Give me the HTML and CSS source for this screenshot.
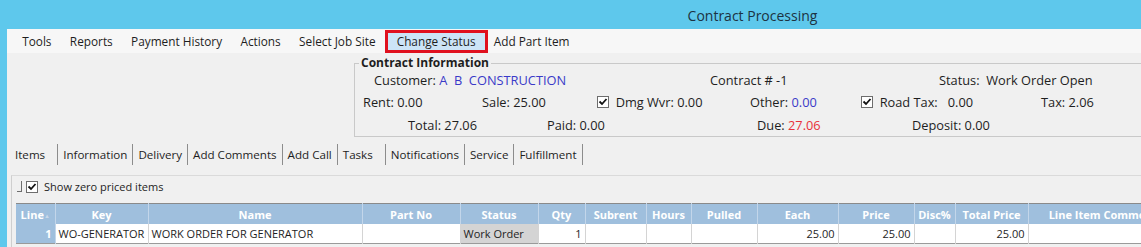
FILE: index.html
```html
<!DOCTYPE html>
<html lang="en">
<head>
    <meta charset="UTF-8">
    <title>Contract Processing</title>
    <link rel="stylesheet" href="styles.css">
</head>
<body>
    <div class="titlebar">Contract Processing</div>

    <div class="window">
        <nav class="menubar">
            <span class="menu-item">Tools</span>
            <span class="menu-item">Reports</span>
            <span class="menu-item">Payment History</span>
            <span class="menu-item">Actions</span>
            <span class="menu-item">Select Job Site</span>
            <span class="menu-item active">Change Status</span>
            <span class="menu-item">Add Part Item</span>
        </nav>

        <fieldset class="contract">
            <legend>Contract Information</legend>
            <div class="row row1">
                <span class="c-cust">Customer: <span class="blue">A&nbsp; B&nbsp; CONSTRUCTION</span></span>
                <span class="c-contract">Contract # -1</span>
                <span>Status:&nbsp;&nbsp;Work Order Open</span>
            </div>
            <div class="row row2">
                <span class="c-rent">Rent: 0.00</span>
                <span class="c-sale">Sale: 25.00</span>
                <span class="c-dmg"><svg class="check" viewBox="0 0 12 12"><rect x="0.5" y="0.5" width="11" height="11" fill="#fff" stroke="#6d6d6d"/><path d="M2.5 5.5 L5 8 L9.5 3" fill="none" stroke="#111" stroke-width="1.8"/></svg>&nbsp; Dmg Wvr: 0.00</span>
                <span class="c-other">Other: <span class="blue">0.00</span></span>
                <span class="c-road"><svg class="check" viewBox="0 0 12 12"><rect x="0.5" y="0.5" width="11" height="11" fill="#fff" stroke="#6d6d6d"/><path d="M2.5 5.5 L5 8 L9.5 3" fill="none" stroke="#111" stroke-width="1.8"/></svg>&nbsp; Road Tax:&nbsp;&nbsp; 0.00</span>
                <span>Tax: 2.06</span>
            </div>
            <div class="row row3">
                <span class="c-total">Total: 27.06</span>
                <span class="c-paid">Paid: 0.00</span>
                <span class="c-due">Due: <span class="red">27.06</span></span>
                <span>Deposit: 0.00</span>
            </div>
        </fieldset>

        <div class="tabs">
            <span class="tab selected">Items</span>
            <span class="tab">Information</span>
            <span class="tab">Delivery</span>
            <span class="tab">Add Comments</span>
            <span class="tab">Add Call</span>
            <span class="tab wide">Tasks</span>
            <span class="tab">Notifications</span>
            <span class="tab">Service</span>
            <span class="tab last">Fulfillment</span>
        </div>

        <div class="panel">
            <div class="zero-row">
                <span class="corner"></span>
                <svg class="check" viewBox="0 0 12 12"><rect x="0.5" y="0.5" width="11" height="11" fill="#fff" stroke="#6d6d6d"/><path d="M2.5 5.5 L5 8 L9.5 3" fill="none" stroke="#111" stroke-width="1.8"/></svg>
                <span>Show zero priced items</span>
            </div>

            <table class="grid">
                <colgroup>
                    <col class="w-line"><col class="w-key"><col class="w-name"><col class="w-part">
                    <col class="w-status"><col class="w-qty"><col class="w-subrent"><col class="w-hours">
                    <col class="w-pulled"><col class="w-each"><col class="w-price"><col class="w-disc">
                    <col class="w-total"><col class="w-comment">
                </colgroup>
                <thead>
                    <tr>
                        <th>Line<span class="sort">▲</span></th>
                        <th>Key</th>
                        <th>Name</th>
                        <th>Part No</th>
                        <th>Status</th>
                        <th>Qty</th>
                        <th>Subrent</th>
                        <th>Hours</th>
                        <th>Pulled</th>
                        <th>Each</th>
                        <th>Price</th>
                        <th>Disc%</th>
                        <th>Total Price</th>
                        <th>Line Item Comment</th>
                    </tr>
                </thead>
                <tbody>
                    <tr>
                        <td class="line-cell">1</td>
                        <td>WO-GENERATOR</td>
                        <td>WORK ORDER FOR GENERATOR</td>
                        <td></td>
                        <td class="status-cell">Work Order</td>
                        <td class="num">1</td>
                        <td></td>
                        <td></td>
                        <td></td>
                        <td class="num">25.00</td>
                        <td class="num">25.00</td>
                        <td></td>
                        <td class="num">25.00</td>
                        <td></td>
                    </tr>
                </tbody>
            </table>
        </div>
    </div>
</body>
</html>
```

FILE: styles.css
```css
html, body {
    margin: 0;
    padding: 0;
}
body {
    width: 1141px;
    height: 247px;
    overflow: hidden;
    background-color: #5ec8ec;
    font-family: 'Open Sans', 'Noto Sans', sans-serif;
    font-size: 12px;
    color: #1e1e1e;
}
.titlebar {
    height: 29px;
    line-height: 31px;
    padding-left: 364px;
    text-align: center;
    font-size: 14px;
    color: #1c3342;
}
.window {
    margin-left: 7px;
    height: 218px;
    background-color: #f0f0f0;
    overflow: hidden;
}
.menubar {
    display: flex;
    align-items: center;
    height: 24px;
    padding-left: 6px;
    background-color: #f7f7f7;
}
.menu-item {
    padding: 0 9.2px;
    line-height: 22px;
    font-size: 11.8px;
}
.menu-item.active {
    background-color: #cce4f7;
    border: 3px solid #e0101e;
    line-height: 17px;
    padding: 0 9px;
    margin: 0 -3px 0 0;
}

/* contract information box */
.contract {
    margin: 3px -20px 0 347px;
    padding: 0;
    border: 1px solid #c9c9c9;
    min-width: 0;
}
.contract legend {
    margin-left: 4px;
    padding: 0 2px;
    font-weight: bold;
    font-size: 12px;
    line-height: 14px;
}
.row {
    display: flex;
    white-space: nowrap;
    font-size: 12.8px;
}
.row1 {
    height: 20px;
    line-height: 20px;
    padding-left: 19px;
}
.row2 {
    height: 24px;
    line-height: 24px;
    padding-left: 8px;
}
.row3 {
    height: 22px;
    line-height: 22px;
    padding-left: 53px;
}
.c-cust { width: 336px; }
.c-contract { width: 229px; }
.c-rent { width: 119px; }
.c-sale { width: 115px; }
.c-dmg { width: 153px; }
.c-other { width: 111px; }
.c-road { width: 180px; }
.c-total { width: 139px; }
.c-paid { width: 210px; }
.c-due { width: 155px; }
.blue { color: #3a3ac8; }
.red { color: #e8303a; }
.check {
    width: 12px;
    height: 12px;
    vertical-align: -1px;
}

/* tabs */
.tabs {
    display: flex;
    margin-top: 7px;
    padding-left: 8px;
    height: 21px;
    font-size: 11.6px;
}
.tab {
    line-height: 21px;
    padding: 0 5px 0 5px;
    border-left: 1px solid #8c8c8c;
}
.tab.selected {
    border-left: none;
    padding: 0 12px 0 0;
}
.tab.wide { padding-right: 12px; }
.tab.last { border-right: 1px solid #8c8c8c; }

/* items panel */
.panel {
    margin: 10px 0 0 4px;
    border-top: 1px solid #dadada;
    border-left: 1px solid #cfcfcf;
    height: 80px;
}
.zero-row {
    display: flex;
    align-items: center;
    height: 21px;
    padding-left: 5px;
    font-size: 11px;
}
.corner {
    width: 4px;
    height: 10px;
    margin-right: 4px;
    border-right: 1px solid #6d6d6d;
    border-bottom: 1px solid #6d6d6d;
}
.zero-row span:last-child { margin-left: 6px; }

.grid {
    margin: 6px 0 0 4px;
    border-collapse: collapse;
    table-layout: fixed;
    width: 1162px;
    font-size: 11px;
    border-top: 1px solid #8a8a8a;
    border-bottom: 1px solid #9a9a9a;
}
.grid th {
    height: 20px;
    padding: 0 3px;
    background-color: #9fbfdd;
    color: #fff;
    font-weight: bold;
    border-right: 1px solid #c3d6ea;
    white-space: nowrap;
    overflow: hidden;
}
.grid td {
    height: 19px;
    padding: 0 3px;
    background-color: #fff;
    border-right: 1px solid #d4d4d4;
    white-space: nowrap;
    overflow: hidden;
}
.grid td.num { text-align: right; }
.grid td.line-cell {
    background-color: #9fbfdd;
    color: #fff;
    font-weight: bold;
    text-align: right;
    border-right: 1px solid #c3d6ea;
}
.grid td.status-cell { background-color: #d4d4d4; }
.sort {
    font-size: 6px;
    color: #c8d8ea;
    vertical-align: 1px;
}
.w-line { width: 39px; }
.w-key { width: 93px; }
.w-name { width: 214px; }
.w-part { width: 98px; }
.w-status { width: 78px; }
.w-qty { width: 47px; }
.w-subrent { width: 61px; }
.w-hours { width: 45px; }
.w-pulled { width: 66px; }
.w-each { width: 81px; }
.w-price { width: 76px; }
.w-disc { width: 41px; }
.w-total { width: 73px; }
.w-comment { width: 150px; }
```
